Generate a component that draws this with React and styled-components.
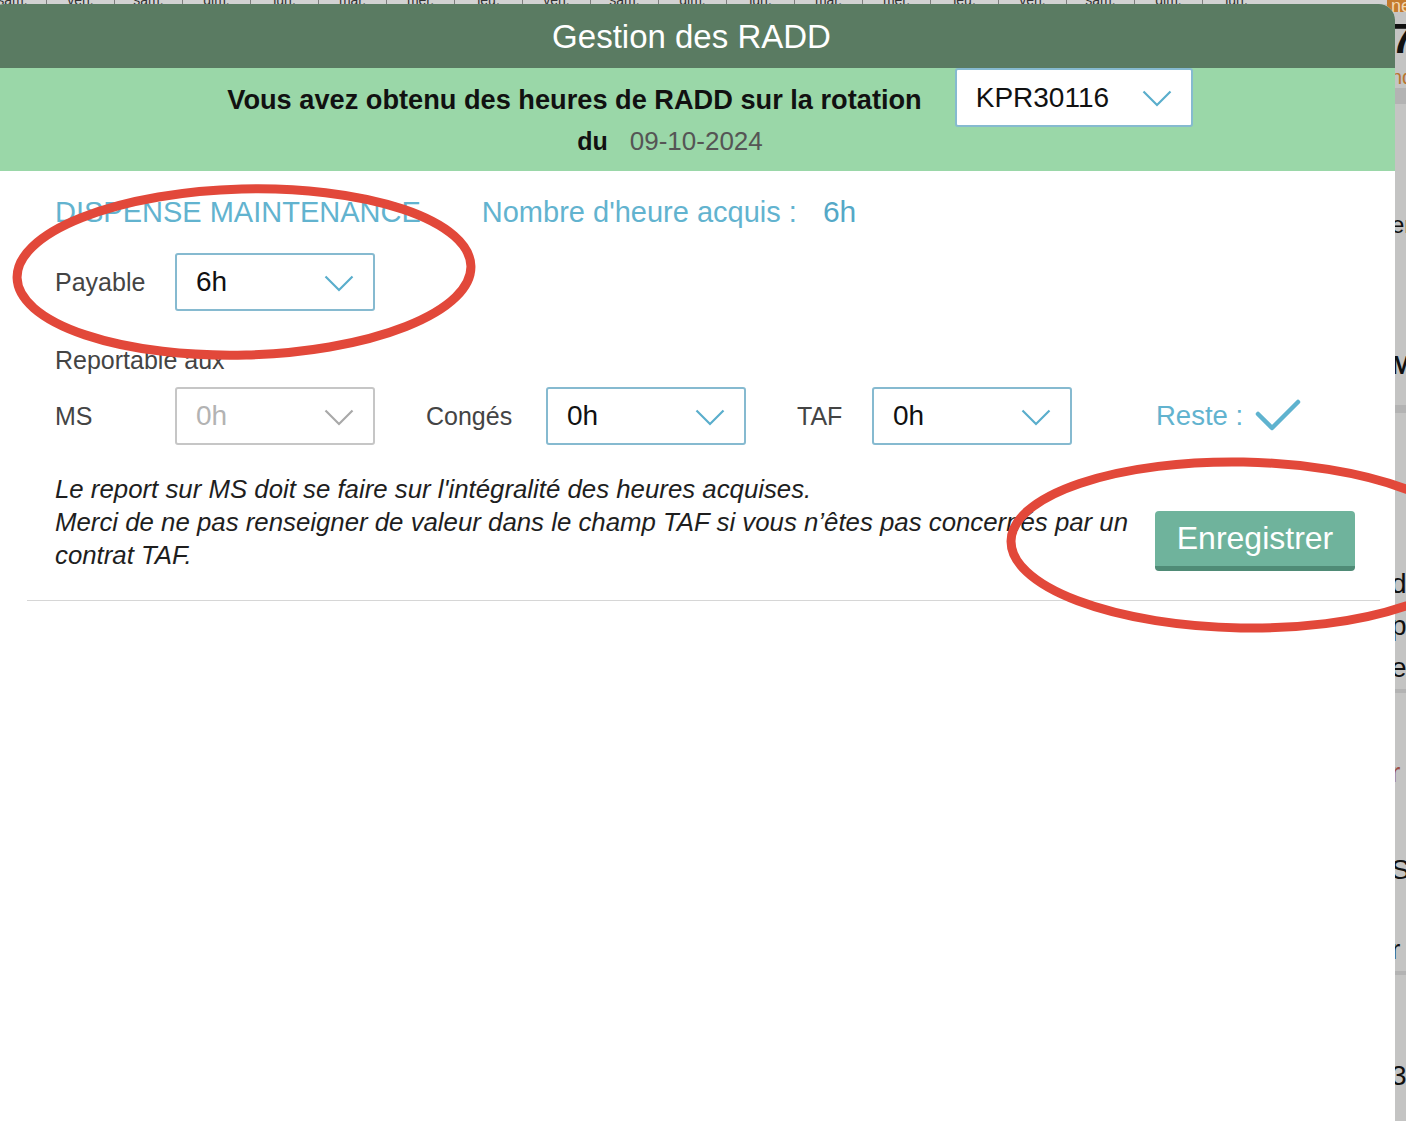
import React from "react";
import styled, { createGlobalStyle } from "styled-components";

const GlobalStyle = createGlobalStyle`
  html, body {
    margin: 0;
    padding: 0;
    background: #c4c4c3;
    font-family: "Liberation Sans", Arial, Helvetica, sans-serif;
  }
`;

const days = ["sam.", "ven.", "sam.", "dim.", "lun.", "mar.", "mer.", "jeu.", "ven.", "sam.", "dim.", "lun.", "mar.", "mer.", "jeu.", "ven.", "sam.", "dim.", "lun."];

const rail = [
  { h: 12, text: "net.", color: "#f2d7b0", bg: "#c47a2c", size: 18 },
  { h: 54, text: "7", color: "#111", size: 42, bold: true },
  { h: 22, text: "nd", color: "#b8742e", size: 20 },
  { h: 16, line: true },
  { h: 101, text: "" },
  { h: 40, text: "er", color: "#111", size: 24 },
  { h: 100, text: "" },
  { h: 40, text: "M", color: "#111", size: 26, bold: true },
  { h: 20, text: "" },
  { h: 8, line: true },
  { h: 150, text: "" },
  { h: 42, text: "d", color: "#111", size: 28 },
  { h: 42, text: "p", color: "#111", size: 28 },
  { h: 42, text: "e", color: "#111", size: 28 },
  { h: 4, line: true },
  { h: 60, text: "" },
  { h: 40, text: "r", color: "#9c4f45", size: 28 },
  { h: 56, text: "" },
  { h: 42, text: "S", color: "#111", size: 28 },
  { h: 38, text: "" },
  { h: 42, text: "r", color: "#111", size: 28 },
  { h: 4, line: true },
  { h: 80, text: "" },
  { h: 42, text: "3", color: "#111", size: 28 },
];

export default function App() {
  return (
    <Page>
      <GlobalStyle />
      <Backdrop>
        <DayStrip>
          {days.map((d, i) => (
            <DayCell key={i}>{d}</DayCell>
          ))}
        </DayStrip>
        <SideRail>
          {rail.map((r, i) =>
            r.line ? (
              <RailLine key={i} $h={r.h} />
            ) : (
              <RailRow key={i} $h={r.h} $color={r.color} $size={r.size} $bold={r.bold} $bg={r.bg}>
                {r.text}
              </RailRow>
            )
          )}
        </SideRail>
      </Backdrop>

      <Modal>
        <Header>Gestion des RADD</Header>
        <Band>
          <BandRow>
            <BandTitle>Vous avez obtenu des heures de RADD sur la rotation</BandTitle>
            <Select value="KPR30116" width={238} height={59} />
          </BandRow>
          <DateRow>
            <strong>du</strong>
            <DateValue>09-10-2024</DateValue>
          </DateRow>
        </Band>

        <Content>
          <SectionRow>
            <SectionTitle>DISPENSE MAINTENANCE</SectionTitle>
            <Acquired>
              Nombre d'heure acquis : <AcquiredValue>6h</AcquiredValue>
            </Acquired>
          </SectionRow>

          <FieldRow>
            <Field label="Payable" labelWidth={120} value="6h" />
          </FieldRow>

          <SubLabel>Reportable aux</SubLabel>

          <FieldsRow>
            <Field label="MS" labelWidth={120} value="0h" disabled />
            <Field label="Congés" labelWidth={120} value="0h" />
            <Field label="TAF" labelWidth={75} value="0h" />
            <Reste>
              Reste :
              <svg width="46" height="34" viewBox="0 0 46 34">
                <path d="M3 15 L17 29 L43 3" fill="none" stroke="#5fb3cf" strokeWidth="4.5" strokeLinecap="round" strokeLinejoin="round" />
              </svg>
            </Reste>
          </FieldsRow>

          <Footer>
            <Note>
              Le report sur MS doit se faire sur l'intégralité des heures acquises.
              <br />
              Merci de ne pas renseigner de valeur dans le champ TAF si vous n’êtes pas concernés par un
              <br />
              contrat TAF.
            </Note>
            <SaveButton>Enregistrer</SaveButton>
          </Footer>
        </Content>
        <Divider />
      </Modal>

      <Annotations viewBox="0 0 1406 1121">
        <ellipse cx="244" cy="272" rx="227" ry="83" transform="rotate(-1.5 244 272)" fill="none" stroke="#e2483a" strokeWidth="9" />
        <ellipse cx="1242" cy="545" rx="231" ry="83" transform="rotate(1 1242 545)" fill="none" stroke="#e2483a" strokeWidth="9" />
      </Annotations>
    </Page>
  );
}

function Field({ label, labelWidth, value, disabled }) {
  return (
    <FieldGroup>
      <FieldLabel $width={labelWidth}>{label}</FieldLabel>
      <Select value={value} width={200} height={58} disabled={disabled} />
    </FieldGroup>
  );
}

function Select({ value, width, height, disabled }) {
  return (
    <SelectBox $width={width} $height={height} $disabled={disabled}>
      <span>{value}</span>
      <svg width="30" height="17" viewBox="0 0 30 17">
        <path d="M1.5 1.5 L15 15 L28.5 1.5" fill="none" stroke={disabled ? "#a9a9a9" : "#5aaecc"} strokeWidth="2.2" />
      </svg>
    </SelectBox>
  );
}

const Page = styled.div`
  position: relative;
  width: 1406px;
  height: 1121px;
  overflow: hidden;
  background: #c4c4c3;
`;

const Backdrop = styled.div`
  display: flex;
  flex-direction: column;
`;

const DayStrip = styled.div`
  display: flex;
  height: 4px;
  overflow: hidden;
  background: #d2d2d2;
  margin-left: -22px;
`;

const DayCell = styled.div`
  flex: 0 0 67px;
  height: 4px;
  border-left: 1px solid #7e7e7e;
  font-size: 14px;
  line-height: 0;
  text-align: center;
  color: #333;
`;

const SideRail = styled.div`
  display: flex;
  flex-direction: column;
  margin-left: 1387px;
  margin-top: -4px;
`;

const RailRow = styled.div`
  height: ${(p) => p.$h}px;
  display: flex;
  align-items: center;
  font-size: ${(p) => p.$size || 20}px;
  font-weight: ${(p) => (p.$bold ? 700 : 400)};
  color: ${(p) => p.$color || "#111"};
  background: ${(p) => p.$bg || "transparent"};
  padding-left: 4px;
  overflow: hidden;
`;

const RailLine = styled.div`
  height: ${(p) => p.$h}px;
  background: #b3b3b3;
`;

const Modal = styled.div`
  position: absolute;
  top: 4px;
  left: -12px;
  width: 1407px;
  bottom: -20px;
  background: #fff;
  border-radius: 16px 16px 0 0;
  overflow: hidden;
`;

const Header = styled.div`
  height: 64px;
  padding-top: 2px;
  box-sizing: border-box;
  background: #5a7b62;
  color: #fff;
  font-size: 33px;
  display: flex;
  align-items: center;
  justify-content: center;
`;

const Band = styled.div`
  background: #9ad7a8;
  height: 103px;
  display: flex;
  flex-direction: column;
`;

const BandRow = styled.div`
  display: flex;
  align-items: center;
  justify-content: center;
  gap: 33px;
  padding-left: 37px;
`;

const BandTitle = styled.div`
  font-size: 27.2px;
  font-weight: 700;
  color: #111;
  padding-top: 4px;
`;

const DateRow = styled.div`
  display: flex;
  align-items: center;
  justify-content: center;
  gap: 22px;
  height: 28px;
  padding-right: 43px;
  font-size: 25px;
  color: #111;
`;

const DateValue = styled.span`
  font-size: 26px;
  color: #555;
`;

const Content = styled.div`
  padding-left: 67px;
  display: flex;
  flex-direction: column;
`;

const SectionRow = styled.div`
  display: flex;
  align-items: center;
  gap: 61px;
  margin-top: 23px;
  height: 36px;
  color: #62b3cf;
  font-size: 29px;
`;

const SectionTitle = styled.div`
  text-transform: uppercase;
`;

const Acquired = styled.div`
  display: flex;
  align-items: center;
  gap: 18px;
  white-space: pre;
`;

const AcquiredValue = styled.span`
  color: #55a8c7;
  font-size: 30px;
`;

const FieldRow = styled.div`
  display: flex;
  align-items: center;
  margin-top: 23px;
`;

const FieldsRow = styled.div`
  display: flex;
  align-items: center;
  gap: 51px;
  margin-top: 12px;
`;

const FieldGroup = styled.div`
  display: flex;
  align-items: center;
`;

const FieldLabel = styled.div`
  width: ${(p) => p.$width}px;
  font-size: 25px;
  color: #444;
`;

const SubLabel = styled.div`
  margin-top: 34px;
  font-size: 25px;
  line-height: 30px;
  color: #444;
`;

const SelectBox = styled.div`
  box-sizing: border-box;
  width: ${(p) => p.$width}px;
  height: ${(p) => p.$height}px;
  display: flex;
  align-items: center;
  justify-content: space-between;
  padding: 0 19px 0 19px;
  background: #fff;
  border: 2px solid ${(p) => (p.$disabled ? "#c6c6c6" : "#86bad0")};
  border-radius: 3px;
  font-size: 28px;
  color: ${(p) => (p.$disabled ? "#b3b3b3" : "#111")};
  svg {
    margin-top: 2px;
  }
`;

const Reste = styled.div`
  display: flex;
  align-items: center;
  gap: 12px;
  margin-left: 33px;
  font-size: 27.5px;
  color: #62b3cf;
`;

const Footer = styled.div`
  display: flex;
  align-items: flex-start;
  gap: 20px;
  margin-top: 28px;
`;

const Note = styled.div`
  width: 1080px;
  font-size: 25.8px;
  font-style: italic;
  line-height: 33px;
  color: #1e1e1e;
  white-space: nowrap;
`;

const SaveButton = styled.button`
  margin-top: 38px;
  box-sizing: border-box;
  width: 200px;
  height: 60px;
  border: none;
  border-bottom: 5px solid #4f8b76;
  border-radius: 4px;
  background: #6fb39c;
  color: #fff;
  font-family: inherit;
  font-size: 32px;
  padding: 0;
  cursor: pointer;
`;

const Divider = styled.div`
  height: 1px;
  background: #d6d6d6;
  margin: 28px 15px 0 39px;
`;

const Annotations = styled.svg`
  position: absolute;
  inset: 0;
  width: 1406px;
  height: 1121px;
  pointer-events: none;
`;
